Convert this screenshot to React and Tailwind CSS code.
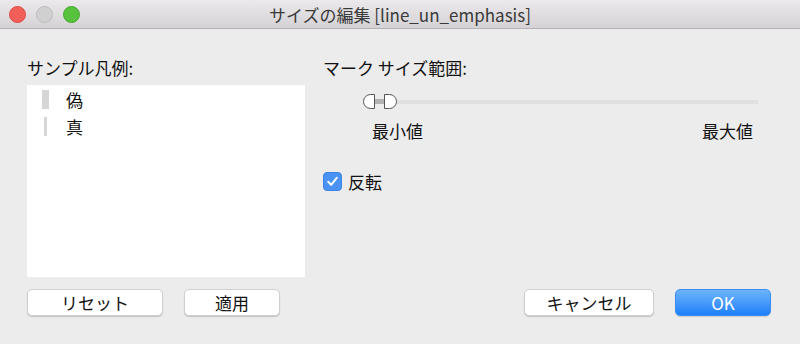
import React from "react";

const font = { fontFamily: '"Noto Sans CJK JP", "Noto Sans", sans-serif' };

function Btn({ children, w, primary }) {
  if (primary) {
    return (
      <div
        className={`${w} h-[27px] rounded-[5px] flex items-center justify-center text-white text-[17px] leading-none bg-gradient-to-b from-[#6cb4fb] to-[#1a7ff9] border border-[#3d8ef3] shadow-[0_1px_1px_rgba(0,0,0,0.15)]`}
      >
        {children}
      </div>
    );
  }
  return (
    <div
      className={`${w} h-[27px] rounded-[5px] flex items-center justify-center text-[#111] text-[17px] leading-none bg-white border border-[#cfcfcf] shadow-[0_1px_1px_rgba(0,0,0,0.18)]`}
    >
      {children}
    </div>
  );
}

export default function App() {
  return (
    <div className="w-[800px] h-[344px] bg-[#ececec] flex flex-col overflow-hidden" style={font}>
      {/* title bar */}
      <div className="h-[29px] shrink-0 grid grid-cols-[1fr_auto_1fr] items-center bg-gradient-to-b from-[#ebe9eb] to-[#d4d2d4] border-b border-[#b4b2b4]">
        <div className="flex items-center gap-[10px] pl-[9px]">
          <div className="w-[17px] h-[17px] rounded-full bg-[#f25f58] border border-[#de4a43]" />
          <div className="w-[17px] h-[17px] rounded-full bg-[#d0d0d0] border border-[#bdbdbd]" />
          <div className="w-[17px] h-[17px] rounded-full bg-[#58c23e] border border-[#42a92c]" />
        </div>
        <div className="text-[17px] leading-none text-[#3a3a3a]">サイズの編集 [line_un_emphasis]</div>
        <div />
      </div>

      {/* body */}
      <div className="flex-1 flex flex-col px-[27px] pt-[28px] text-[#111]">
        <div className="flex">
          {/* left column */}
          <div className="w-[278px] flex flex-col">
            <div className="h-[20px] flex items-center text-[17px] leading-none">サンプル凡例:</div>
            <div className="mt-[8px] h-[192px] bg-white pt-[1px]">
              <div className="h-[27px] flex items-center">
                <div className="ml-[15px] w-[7px] flex justify-center">
                  <div className="w-[7px] h-[19px] bg-[#d6d6d6]" />
                </div>
                <span className="ml-[17px] text-[17px] leading-none">偽</span>
              </div>
              <div className="h-[27px] flex items-center">
                <div className="ml-[15px] w-[7px] flex justify-center">
                  <div className="w-[3px] h-[19px] bg-[#d6d6d6]" />
                </div>
                <span className="ml-[17px] text-[17px] leading-none">真</span>
              </div>
            </div>
          </div>

          {/* right column */}
          <div className="ml-[18px] w-[448px] flex flex-col">
            <div className="h-[20px] flex items-center text-[17px] leading-none">マーク サイズ範囲:</div>
            <div className="mt-[17px] ml-[40px] w-[395px] h-[15px] flex items-center">
              <div className="w-[12px] h-[15px] rounded-l-full bg-white border-[1.5px] border-[#555]" />
              <div className="w-[9px] h-[5px] bg-[#b3b3b3]" />
              <div className="w-[13px] h-[15px] rounded-r-full bg-white border-[1.5px] border-[#555]" />
              <div className="flex-1 h-[4px] bg-[#e0e0e0]" />
            </div>
            <div className="mt-[11px] ml-[49px] w-[381px] flex justify-between text-[17px] leading-none h-[20px] items-center">
              <span>最小値</span>
              <span>最大値</span>
            </div>
            <div className="mt-[31px] flex items-center h-[20px]">
              <div className="w-[19px] h-[19px] rounded-[4px] bg-[#4a92f4] border border-[#3b83e6] flex items-center justify-center">
                <svg width="13" height="13" viewBox="0 0 13 13">
                  <path d="M2.2 6.8 L5.2 9.8 L10.8 2.8" fill="none" stroke="white" strokeWidth="2" strokeLinecap="round" strokeLinejoin="round" />
                </svg>
              </div>
              <span className="ml-[6px] text-[17px] leading-none">反転</span>
            </div>
          </div>
        </div>

        {/* footer buttons */}
        <div className="mt-[12px] flex items-center">
          <Btn w="w-[136px]">リセット</Btn>
          <div className="ml-[21px]">
            <Btn w="w-[96px]">適用</Btn>
          </div>
          <div className="flex-1" />
          <Btn w="w-[130px]">キャンセル</Btn>
          <div className="ml-[21px] mr-[2px]">
            <Btn w="w-[96px]" primary>OK</Btn>
          </div>
        </div>
      </div>
    </div>
  );
}
